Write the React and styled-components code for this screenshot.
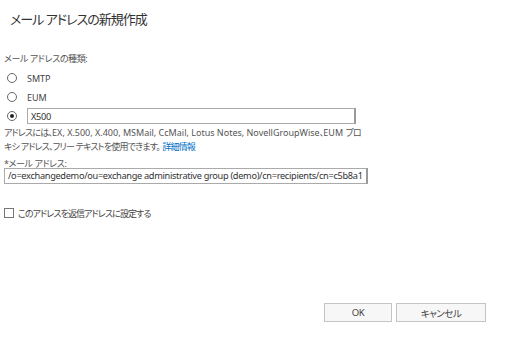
import React from "react";
import styled, { createGlobalStyle } from "styled-components";

const GlobalStyle = createGlobalStyle`
  html, body {
    margin: 0;
    padding: 0;
    background: #fff;
  }
  body {
    font-family: "Noto Sans", "Noto Sans CJK JP", sans-serif;
    font-feature-settings: "palt";
    color: #444;
  }
`;

const Dialog = styled.div`
  width: 508px;
  height: 344px;
  box-sizing: border-box;
  padding: 8px 22px 22px 4px;
  display: flex;
  flex-direction: column;
`;

const Title = styled.h1`
  margin: 0 0 0 6px;
  height: 22px;
  font-size: 13px;
  font-weight: 400;
  letter-spacing: -1px;
  line-height: 22px;
  color: #333;
`;

// narrower Japanese runs (the original uses a UI font with tight kana)
const Ja = styled.span`
  letter-spacing: -0.8px;
`;

const Label = styled.div`
  height: 12px;
  font-size: 9px;
  line-height: 12px;
  letter-spacing: -0.4px;
  color: #555;
  margin-top: ${(p) => p.$top || 0}px;
`;

const RadioList = styled.div`
  display: flex;
  flex-direction: column;
  gap: 2.5px;
  margin-top: 5px;
`;

const RadioRow = styled.label`
  display: flex;
  align-items: center;
  height: 16.5px;
  gap: 10px;
  padding-left: 3px;
  font-size: 9px;
  color: #444;
`;

const RadioCircle = styled.span`
  width: 8px;
  height: 8px;
  border: 1px solid #666;
  border-radius: 50%;
  display: flex;
  align-items: center;
  justify-content: center;
  flex-shrink: 0;
  &::after {
    content: "";
    width: 4px;
    height: 4px;
    border-radius: 50%;
    background: ${(p) => (p.$checked ? "#222" : "transparent")};
  }
`;

const TextBox = styled.div`
  box-sizing: border-box;
  width: ${(p) => p.$width}px;
  height: 16px;
  flex-shrink: 0;
  margin-top: ${(p) => p.$top || 0}px;
  border: 1px solid #aaa;
  border-right: 2px solid #999;
  padding: 0 3px;
  display: flex;
  align-items: center;
  font-size: 9.2px;
  letter-spacing: -0.3px;
  color: #333;
  white-space: nowrap;
  overflow: hidden;
`;

const Help = styled.p`
  margin: 1px 0 0;
  font-size: 9px;
  line-height: 14px;
  color: #555;
  width: 362px;
`;

const Link = styled.a`
  color: #0072c6;
  text-decoration: none;
  letter-spacing: -0.8px;
`;

const CheckRow = styled.label`
  display: flex;
  align-items: center;
  gap: 4px;
  margin-top: 23px;
  font-size: 9px;
  letter-spacing: -0.9px;
  color: #444;
`;

const CheckBox = styled.span`
  width: 8px;
  height: 8px;
  border: 1px solid #777;
  flex-shrink: 0;
`;

const Footer = styled.div`
  margin-top: auto;
  display: flex;
  justify-content: flex-end;
  gap: 4px;
`;

const Button = styled.button`
  box-sizing: border-box;
  width: ${(p) => p.$width}px;
  height: 19px;
  background: #f7f7f7;
  border: 1px solid #c4c4c4;
  font-family: inherit;
  font-feature-settings: "palt";
  font-size: 9.5px;
  letter-spacing: -0.5px;
  color: #444;
  padding: 0;
`;

export default function App() {
  return (
    <>
      <GlobalStyle />
      <Dialog>
        <Title>メール アドレスの新規作成</Title>
        <Label $top={23}>メール アドレスの種類:</Label>
        <RadioList>
          <RadioRow>
            <RadioCircle />
            SMTP
          </RadioRow>
          <RadioRow>
            <RadioCircle />
            EUM
          </RadioRow>
          <RadioRow>
            <RadioCircle $checked />
            <TextBox $width={329}>X500</TextBox>
          </RadioRow>
        </RadioList>
        <Help>
          <Ja>アドレスには、</Ja>EX, X.500, X.400, MSMail, CcMail, Lotus Notes,
          NovellGroupWise<Ja>、</Ja>EUM <Ja>プロキシ アドレス、フリー テキストを使用できます。</Ja>{" "}
          <Link href="#">詳細情報</Link>
        </Help>
        <Label $top={4}>*メール アドレス:</Label>
        <TextBox $width={364} $top={-2}>
          /o=exchangedemo/ou=exchange administrative group (demo)/cn=recipients/cn=c5b8a1
        </TextBox>
        <CheckRow>
          <CheckBox />
          このアドレスを返信アドレスに設定する
        </CheckRow>
        <Footer>
          <Button $width={68}>OK</Button>
          <Button $width={90}>キャンセル</Button>
        </Footer>
      </Dialog>
    </>
  );
}
